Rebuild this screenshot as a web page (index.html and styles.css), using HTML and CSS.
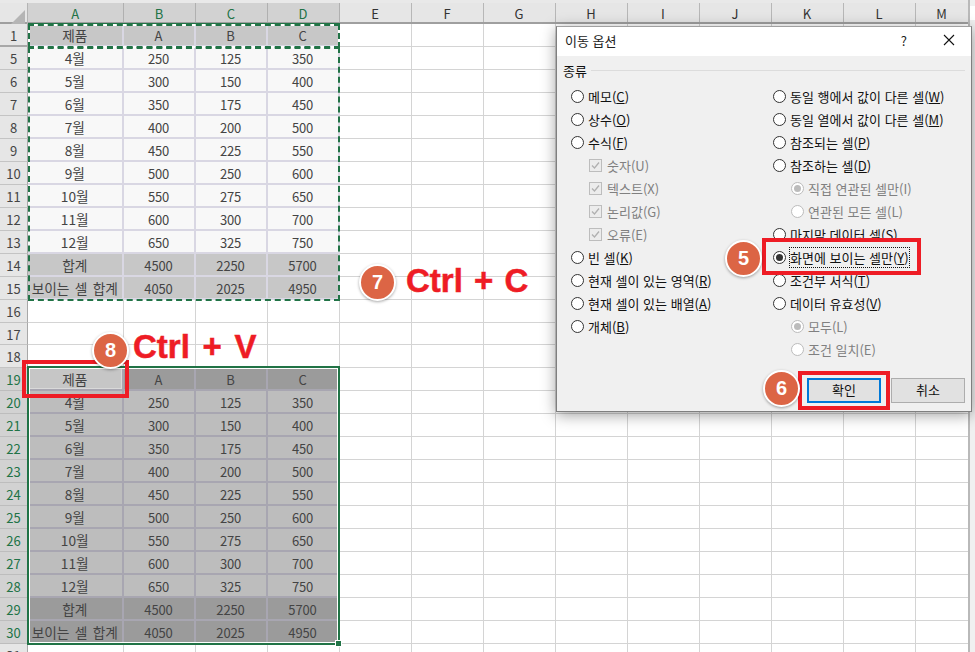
FILE: index.html
```html
<!DOCTYPE html>
<html lang="ko">
<head>
<meta charset="utf-8">
<title>이동 옵션</title>
<link rel="stylesheet" href="styles.css">
</head>
<body>
<div class="app">
  <div class="sheet">
    <div class="topstrip"></div>
    <div class="colhead">
      <div class="corner"><svg width="28" height="21" viewBox="0 0 28 21"><polygon points="25,7 25,21 11,21" fill="#b5b5b5"/></svg></div>
      <div class="ch a sel">A</div><div class="ch sel">B</div><div class="ch sel">C</div><div class="ch sel">D</div>
      <div class="ch">E</div><div class="ch">F</div><div class="ch">G</div><div class="ch">H</div><div class="ch">I</div><div class="ch">J</div><div class="ch">K</div><div class="ch">L</div><div class="ch m">M</div>
    </div>
    <div class="row"><div class="rh gap">1</div><div class="c a t-hdr">제품</div><div class="c t-hdr">A</div><div class="c t-hdr">B</div><div class="c t-hdr">C</div><div class="blank"></div></div>
    <div class="row"><div class="rh">5</div><div class="c a">4월</div><div class="c">250</div><div class="c">125</div><div class="c">350</div><div class="blank"></div></div>
    <div class="row"><div class="rh">6</div><div class="c a">5월</div><div class="c">300</div><div class="c">150</div><div class="c">400</div><div class="blank"></div></div>
    <div class="row"><div class="rh">7</div><div class="c a">6월</div><div class="c">350</div><div class="c">175</div><div class="c">450</div><div class="blank"></div></div>
    <div class="row"><div class="rh">8</div><div class="c a">7월</div><div class="c">400</div><div class="c">200</div><div class="c">500</div><div class="blank"></div></div>
    <div class="row"><div class="rh">9</div><div class="c a">8월</div><div class="c">450</div><div class="c">225</div><div class="c">550</div><div class="blank"></div></div>
    <div class="row"><div class="rh">10</div><div class="c a">9월</div><div class="c">500</div><div class="c">250</div><div class="c">600</div><div class="blank"></div></div>
    <div class="row"><div class="rh">11</div><div class="c a">10월</div><div class="c">550</div><div class="c">275</div><div class="c">650</div><div class="blank"></div></div>
    <div class="row"><div class="rh">12</div><div class="c a">11월</div><div class="c">600</div><div class="c">300</div><div class="c">700</div><div class="blank"></div></div>
    <div class="row"><div class="rh">13</div><div class="c a">12월</div><div class="c">650</div><div class="c">325</div><div class="c">750</div><div class="blank"></div></div>
    <div class="row"><div class="rh">14</div><div class="c a t-hdr">합계</div><div class="c t-hdr">4500</div><div class="c t-hdr">2250</div><div class="c t-hdr">5700</div><div class="blank"></div></div>
    <div class="row"><div class="rh">15</div><div class="c a t-hdr">보이는 셀 합계</div><div class="c t-hdr">4050</div><div class="c t-hdr">2025</div><div class="c t-hdr">4950</div><div class="blank"></div></div>
    <div class="row short"><div class="rh">16</div><div class="c a e"></div><div class="c e"></div><div class="c e"></div><div class="c e"></div><div class="blank"></div></div>
    <div class="row short"><div class="rh">17</div><div class="c a e"></div><div class="c e"></div><div class="c e"></div><div class="c e"></div><div class="blank"></div></div>
    <div class="row short"><div class="rh">18</div><div class="c a e"></div><div class="c e"></div><div class="c e"></div><div class="c e"></div><div class="blank"></div></div>
    <div class="row"><div class="rh on">19</div><div class="c a p-first">제품</div><div class="c p-dark">A</div><div class="c p-dark">B</div><div class="c p-dark">C</div><div class="blank"></div></div>
    <div class="row"><div class="rh on">20</div><div class="c a p">4월</div><div class="c p">250</div><div class="c p">125</div><div class="c p">350</div><div class="blank"></div></div>
    <div class="row"><div class="rh on">21</div><div class="c a p">5월</div><div class="c p">300</div><div class="c p">150</div><div class="c p">400</div><div class="blank"></div></div>
    <div class="row"><div class="rh on">22</div><div class="c a p">6월</div><div class="c p">350</div><div class="c p">175</div><div class="c p">450</div><div class="blank"></div></div>
    <div class="row"><div class="rh on">23</div><div class="c a p">7월</div><div class="c p">400</div><div class="c p">200</div><div class="c p">500</div><div class="blank"></div></div>
    <div class="row"><div class="rh on">24</div><div class="c a p">8월</div><div class="c p">450</div><div class="c p">225</div><div class="c p">550</div><div class="blank"></div></div>
    <div class="row"><div class="rh on">25</div><div class="c a p">9월</div><div class="c p">500</div><div class="c p">250</div><div class="c p">600</div><div class="blank"></div></div>
    <div class="row"><div class="rh on">26</div><div class="c a p">10월</div><div class="c p">550</div><div class="c p">275</div><div class="c p">650</div><div class="blank"></div></div>
    <div class="row"><div class="rh on">27</div><div class="c a p">11월</div><div class="c p">600</div><div class="c p">300</div><div class="c p">700</div><div class="blank"></div></div>
    <div class="row"><div class="rh on">28</div><div class="c a p">12월</div><div class="c p">650</div><div class="c p">325</div><div class="c p">750</div><div class="blank"></div></div>
    <div class="row"><div class="rh on">29</div><div class="c a p-dark">합계</div><div class="c p-dark">4500</div><div class="c p-dark">2250</div><div class="c p-dark">5700</div><div class="blank"></div></div>
    <div class="row"><div class="rh on">30</div><div class="c a p-dark">보이는 셀 합계</div><div class="c p-dark">4050</div><div class="c p-dark">2025</div><div class="c p-dark">4950</div><div class="blank"></div></div>
    <div class="row"><div class="rh">31</div><div class="c a e"></div><div class="c e"></div><div class="c e"></div><div class="c e"></div><div class="blank"></div></div>
  </div>
  <div class="vbar"><div class="vbar-box"></div></div>
</div>

<div class="ants ants-top"></div>
<div class="ants ants-body"></div>
<div class="paste-sel"><div class="handle"></div></div>

<div class="dlg">
  <div class="dlg-title">
    <span class="dlg-name">이동 옵션</span>
    <span class="dlg-help">?</span>
    <svg class="dlg-x" width="12" height="12" viewBox="0 0 12 12"><path d="M1 1 11 11M11 1 1 11" stroke="#111" stroke-width="1.1" fill="none"/></svg>
  </div>
  <div class="dlg-body">
    <div class="legend"><span>종류</span><i></i></div>
    <div class="cols">
      <div class="col col-l">
        <div class="opt"><b class="rd"></b>메모(<u>C</u>)</div>
        <div class="opt"><b class="rd"></b>상수(<u>O</u>)</div>
        <div class="opt"><b class="rd"></b>수식(<u>F</u>)</div>
        <div class="opt sub off"><svg class="ck" width="13" height="13" viewBox="0 0 13 13"><rect x=".5" y=".5" width="12" height="12" fill="#ececec" stroke="#bdbdbd"/><path d="M3 6.5 5.5 9 10 3.5" stroke="#b0b0b0" stroke-width="1.3" fill="none"/></svg>숫자(U)</div>
        <div class="opt sub off"><svg class="ck" width="13" height="13" viewBox="0 0 13 13"><rect x=".5" y=".5" width="12" height="12" fill="#ececec" stroke="#bdbdbd"/><path d="M3 6.5 5.5 9 10 3.5" stroke="#b0b0b0" stroke-width="1.3" fill="none"/></svg>텍스트(X)</div>
        <div class="opt sub off"><svg class="ck" width="13" height="13" viewBox="0 0 13 13"><rect x=".5" y=".5" width="12" height="12" fill="#ececec" stroke="#bdbdbd"/><path d="M3 6.5 5.5 9 10 3.5" stroke="#b0b0b0" stroke-width="1.3" fill="none"/></svg>논리값(G)</div>
        <div class="opt sub off"><svg class="ck" width="13" height="13" viewBox="0 0 13 13"><rect x=".5" y=".5" width="12" height="12" fill="#ececec" stroke="#bdbdbd"/><path d="M3 6.5 5.5 9 10 3.5" stroke="#b0b0b0" stroke-width="1.3" fill="none"/></svg>오류(E)</div>
        <div class="opt"><b class="rd"></b>빈 셀(<u>K</u>)</div>
        <div class="opt"><b class="rd"></b>현재 셀이 있는 영역(<u>R</u>)</div>
        <div class="opt"><b class="rd"></b>현재 셀이 있는 배열(<u>A</u>)</div>
        <div class="opt"><b class="rd"></b>개체(<u>B</u>)</div>
      </div>
      <div class="col">
        <div class="opt"><b class="rd"></b>동일 행에서 값이 다른 셀(<u>W</u>)</div>
        <div class="opt"><b class="rd"></b>동일 열에서 값이 다른 셀(<u>M</u>)</div>
        <div class="opt"><b class="rd"></b>참조되는 셀(<u>P</u>)</div>
        <div class="opt"><b class="rd"></b>참조하는 셀(<u>D</u>)</div>
        <div class="opt sub-r off"><b class="rd dis on"></b>직접 연관된 셀만(I)</div>
        <div class="opt sub-r off"><b class="rd dis"></b>연관된 모든 셀(L)</div>
        <div class="opt"><b class="rd"></b>마지막 데이터 셀(<u>S</u>)</div>
        <div class="opt"><b class="rd on"></b><span class="focus">화면에 보이는 셀만(<u>Y</u>)</span></div>
        <div class="opt"><b class="rd"></b>조건부 서식(<u>T</u>)</div>
        <div class="opt"><b class="rd"></b>데이터 유효성(<u>V</u>)</div>
        <div class="opt sub-r off"><b class="rd dis on"></b>모두(L)</div>
        <div class="opt sub-r off"><b class="rd dis"></b>조건 일치(E)</div>
      </div>
    </div>
    <div class="foot">
      <div class="btn primary">확인</div>
      <div class="btn">취소</div>
    </div>
  </div>
</div>

<div class="redbox rb-5"></div>
<div class="redbox rb-6"></div>
<div class="redbox rb-8"></div>
<div class="badge b5">5</div>
<div class="badge b6">6</div>
<div class="badge b7">7</div>
<div class="badge b8">8</div>
<div class="keys k-c">Ctrl + C</div>
<div class="keys k-v">Ctrl + V</div>
</body>
</html>
```

FILE: styles.css
```css
html, body {
  margin: 0;
  padding: 0;
  width: 975px;
  height: 652px;
  overflow: hidden;
  background: #fff;
}
body {
  position: relative;
  font-family: "Noto Sans CJK KR", "Noto Sans", sans-serif;
  font-size: 13px;
  color: #444;
}
.app {
  display: flex;
  width: 975px;
  height: 652px;
  overflow: hidden;
}
.sheet {
  width: 967.5px;
  flex: none;
}
.topstrip {
  height: 3px;
  background: #e9e9e9;
}
.colhead {
  display: flex;
  height: 21px;
  box-sizing: border-box;
  border-bottom: 2px solid #9f9f9f;
  background: #e6e6e6;
}
.corner {
  width: 28px;
  flex: none;
  height: 21px;
  box-sizing: border-box;
  border-right: 1px solid #b4b4b4;
  overflow: hidden;
}
.corner svg { display: block; }
.ch {
  width: 72px;
  flex: none;
  box-sizing: border-box;
  border-right: 1px solid #b7b7b7;
  text-align: center;
  line-height: 21px;
  font-size: 13px;
  color: #333;
}
.ch.a { width: 95.5px; }
.ch.m { flex: 1; border-right: 0; }
.ch.sel {
  background: #d2d2d2;
  color: #217346;
  border-right-color: #b0b0b0;
}
.row {
  display: flex;
  height: 23px;
}
.row.short { height: 22.67px; }
.rh {
  width: 28px;
  flex: none;
  box-sizing: border-box;
  background: #e6e6e6;
  border-right: 1px solid #a8a8a8;
  border-bottom: 1px solid #c4c4c4;
  text-align: center;
  line-height: 23px;
  font-size: 13px;
  color: #444;
}
.rh.gap { border-bottom: 2px solid #a8a8a8; }
.rh.on {
  background: #d2d2d2;
  color: #217346;
  border-bottom-color: #bdbdbd;
}
.c {
  width: 72px;
  flex: none;
  box-sizing: border-box;
  background: #f8f8f8;
  border-right: 2px solid #d9d7e3;
  border-bottom: 2px solid #d9d7e3;
  text-align: center;
  line-height: 23px;
  font-size: 13px;
  letter-spacing: -0.15px;
  color: #444;
  white-space: nowrap;
  overflow: hidden;
}
.c.a {
  width: 95.5px;
  font-size: 13.7px;
  letter-spacing: 0;
  word-spacing: 1.5px;
}
.c.t-hdr { background: #c7c7c7; }
.c.e {
  background: #fff;
  border-right: 1px solid #d4d4d4;
  border-bottom: 1px solid #d4d4d4;
}
.c.p {
  background: #bdbdbd;
  border-right-color: #a8a6b1;
  border-bottom-color: #a8a6b1;
}
.c.p-dark {
  background: #9b9b9b;
  border-right-color: #a8a6b1;
  border-bottom-color: #a8a6b1;
}
.c.p-first {
  background: #c6c6c6;
  border-right-color: #a8a6b1;
  border-bottom-color: #a8a6b1;
  box-shadow: inset 0 0 0 1px #d9d9d9;
}
.blank {
  flex: 1;
  box-sizing: border-box;
  border-bottom: 1px solid #d4d4d4;
  background: repeating-linear-gradient(90deg, #fff 0 71px, #d4d4d4 71px 72px);
}
.vbar {
  flex: 1;
  background: #f0f0f0;
  border-left: 2px solid #b9b9b9;
  position: relative;
}
.vbar-box {
  position: absolute;
  left: 0;
  right: 0;
  top: 6px;
  height: 14px;
  background: #fff;
}

/* selection overlays */
.ants {
  position: absolute;
  box-sizing: border-box;
  border: 2px solid #fff;
}
.ants::after {
  content: "";
  position: absolute;
  inset: -2px;
  border: 2px dashed #217346;
}
.ants-top {
  left: 28px;
  top: 24px;
  width: 312px;
  height: 24px;
  box-shadow: 0 -1px 0 #217346;
}
.ants-body {
  left: 28px;
  top: 47px;
  width: 312px;
  height: 254px;
  border-color: transparent;
}
.paste-sel {
  position: absolute;
  left: 27px;
  top: 366px;
  width: 313px;
  height: 279px;
  box-sizing: border-box;
  border: 2px solid #217346;
  box-shadow: inset 0 0 0 1px #fff;
}
.handle {
  position: absolute;
  right: -4px;
  bottom: -4px;
  width: 5px;
  height: 5px;
  background: #217346;
  border: 1px solid #fff;
}

/* dialog */
.dlg {
  position: absolute;
  left: 556px;
  top: 26px;
  width: 416px;
  height: 386px;
  box-sizing: border-box;
  display: flex;
  flex-direction: column;
  background: #f0f0f0;
  border: 1px solid #7f7f7f;
  border-top-color: #a0a0a0;
  box-shadow: 0 3px 14px rgba(0, 0, 0, 0.38);
  font-size: 13px;
  color: #111;
}
.dlg-title {
  height: 29px;
  box-sizing: border-box;
  flex: none;
  background: #fff;
  display: flex;
  align-items: center;
  padding: 0 16px 3px 8px;
}
.dlg-name { flex: 1; color: #222; }
.dlg-help { margin-right: 36px; color: #222; }
.dlg-x { display: block; }
.dlg-body {
  flex: 1;
  display: flex;
  flex-direction: column;
  min-height: 0;
  padding: 4px 6px 8px 6px;
}
.legend {
  display: flex;
  align-items: center;
  gap: 4px;
  height: 20px;
  flex: none;
}
.legend i {
  flex: 1;
  height: 1px;
  background: #dcdcdc;
}
.cols {
  display: flex;
  padding-left: 8px;
  margin-top: 5px;
}
.col { display: flex; flex-direction: column; }
.col-l { width: 202px; flex: none; }
.opt {
  height: 23px;
  display: flex;
  align-items: center;
  white-space: pre;
}
.rd {
  width: 13px;
  height: 13px;
  box-sizing: border-box;
  border: 1px solid #333;
  border-radius: 50%;
  background: #fff;
  margin-right: 4px;
  flex: none;
  display: flex;
  align-items: center;
  justify-content: center;
}
.rd.on::after {
  content: "";
  width: 7px;
  height: 7px;
  border-radius: 50%;
  background: #333;
}
.rd.dis { border-color: #bcbcbc; }
.rd.dis.on::after { background: #bcbcbc; }
.off { color: #808080; }
.sub { padding-left: 18px; }
.sub-r { padding-left: 18px; }
.ck { margin-right: 5px; flex: none; }
.focus {
  outline: 1px dotted #111;
  outline-offset: 0;
}
.foot {
  margin-top: auto;
  display: flex;
  justify-content: flex-end;
  gap: 10px;
}
.btn {
  width: 74px;
  height: 25px;
  box-sizing: border-box;
  background: #e1e1e1;
  border: 1px solid #adadad;
  text-align: center;
  line-height: 22px;
  color: #111;
}
.btn.primary {
  border: 2px solid #0078d7;
  line-height: 20px;
}

/* annotations */
.redbox {
  position: absolute;
  box-sizing: border-box;
  border: 4px solid #ee1c25;
}
.rb-5 { left: 762px; top: 238px; width: 159px; height: 37px; }
.rb-6 { left: 798px; top: 371px; width: 92px; height: 39px; }
.rb-8 { left: 22px; top: 360px; width: 107px; height: 38px; }
.badge {
  position: absolute;
  box-sizing: border-box;
  width: 37px;
  height: 37px;
  border-radius: 50%;
  background: #dc6545;
  border: 2px solid #fff;
  box-shadow: 0 1px 3px rgba(0, 0, 0, 0.35);
  color: #fff;
  font-family: "Liberation Sans", sans-serif;
  font-weight: 700;
  font-size: 20px;
  line-height: 33px;
  text-align: center;
}
.b5 { left: 725px; top: 240px; }
.b6 { left: 763px; top: 370px; }
.b7 { left: 359px; top: 264px; }
.b8 { left: 92px; top: 332px; }
.keys {
  position: absolute;
  font-family: "Liberation Sans", sans-serif;
  font-weight: 700;
  font-size: 33px;
  line-height: 38px;
  color: #ee1c25;
  -webkit-text-stroke: 0.5px #ee1c25;
  white-space: nowrap;
}
.k-c { left: 406px; top: 262px; word-spacing: 2px; }
.k-v { left: 133px; top: 328px; word-spacing: 3.5px; }
```
